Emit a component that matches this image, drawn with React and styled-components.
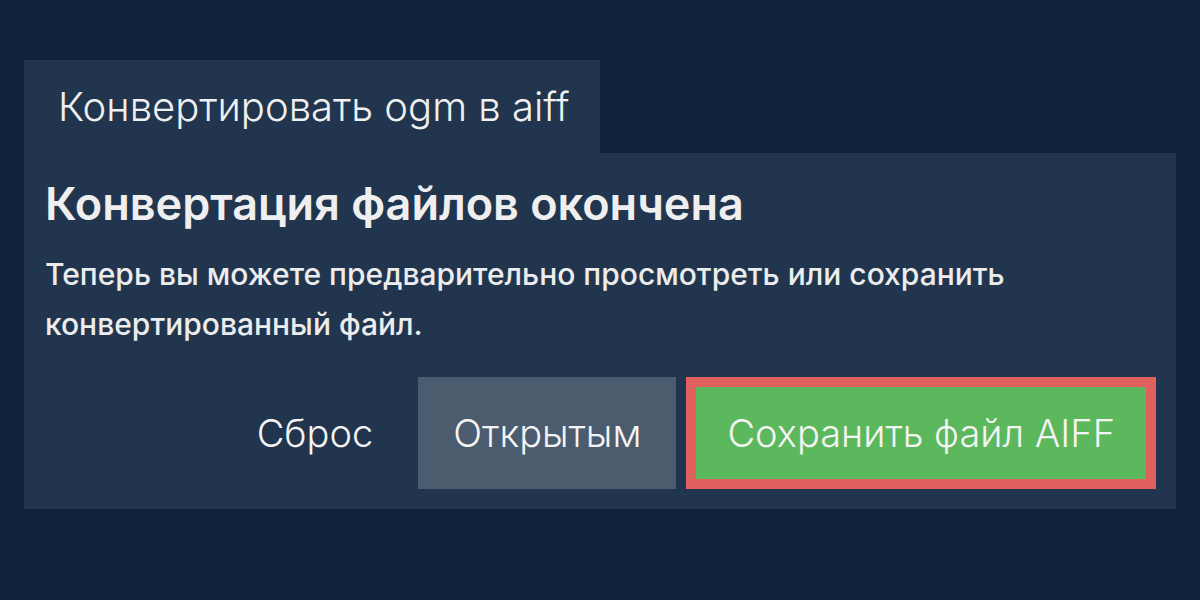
import React from 'react';
import styled, { createGlobalStyle } from 'styled-components';

const GlobalStyle = createGlobalStyle`
    html, body {
        margin: 0;
        padding: 0;
        background-color: #11233a;
    }
    body {
        font-family: Inter, "Noto Sans", sans-serif;
        color: #f0f0f0;
    }
`;

const Page = styled.div`
    width: 1200px;
    height: 600px;
    box-sizing: border-box;
    padding: 60px 24px 0 24px;
    display: flex;
    flex-direction: column;
    align-items: flex-start;
`;

const Tab = styled.div`
    box-sizing: border-box;
    width: 576px;
    height: 93px;
    padding: 0 0 0 34px;
    display: flex;
    align-items: center;
    background-color: #21364e;
    font-size: 40px;
    font-weight: 300;
    color: #f0f0f0;
    white-space: nowrap;
`;

const Panel = styled.div`
    box-sizing: border-box;
    width: 1152px;
    background-color: #21364e;
    padding: 20px 20px 20px 21px;
    display: flex;
    flex-direction: column;
`;

const Title = styled.h2`
    margin: 0;
    font-size: 45px;
    font-weight: 600;
    line-height: 62px;
    color: #efefef;
`;

const Message = styled.p`
    margin: 14px 0 28px 0;
    font-size: 30px;
    font-weight: 500;
    line-height: 50px;
    color: #ececec;
`;

const Actions = styled.div`
    display: flex;
    justify-content: flex-end;
    gap: 10px;
`;

const Button = styled.button`
    box-sizing: border-box;
    height: 112px;
    padding: 0 ${p => p.$pad || 25}px;
    border: 10px solid ${p => p.$border || 'transparent'};
    background-color: ${p => p.$bg || 'transparent'};
    color: #f4f4f4;
    font-family: Inter, "Noto Sans", sans-serif;
    font-size: 38px;
    font-weight: 300;
    cursor: pointer;
    white-space: nowrap;
`;

export default function App() {
    return (
        <>
            <GlobalStyle />
            <Page>
                <Tab>Конвертировать ogm в aiff</Tab>
                <Panel>
                    <Title>Конвертация файлов окончена</Title>
                    <Message>
                        Теперь вы можете предварительно просмотреть или сохранить конвертированный файл.
                    </Message>
                    <Actions>
                        <Button>Сброс</Button>
                        <Button $bg="#4b5c6e">Открытым</Button>
                        <Button $bg="#5cb85c" $border="#df605d" $pad={31}>Сохранить файл AIFF</Button>
                    </Actions>
                </Panel>
            </Page>
        </>
    );
}
